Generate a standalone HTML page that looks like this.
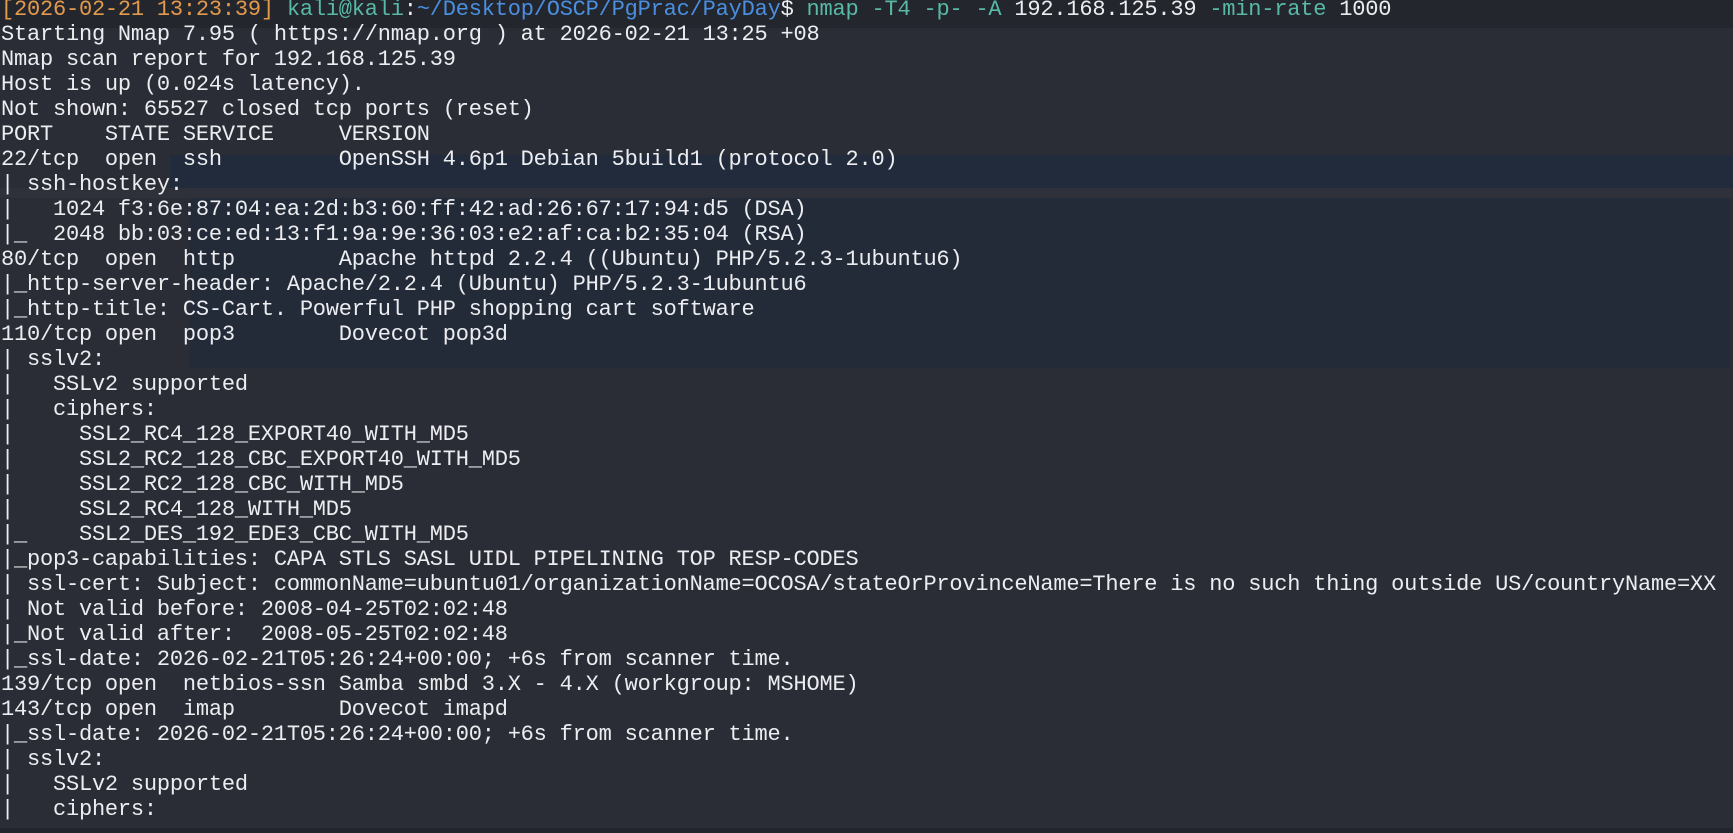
<!DOCTYPE html>
<html><head><meta charset="utf-8"><style>
html,body{margin:0;padding:0;width:1733px;height:833px;overflow:hidden;background:#2a2d36;}
.bg{position:absolute;}
pre{position:absolute;left:1px;top:-3px;margin:0;font-family:"Liberation Mono",monospace;font-size:22px;line-height:25px;color:#ecedf0;letter-spacing:-0.21px;}
.o{color:#e49a4d}.g{color:#58b9a6}.b{color:#4a8fe0}
</style></head><body>
<div class="bg" style="left:0;top:0;width:1733px;height:28px;background:#23262d"></div>
<div class="bg" style="left:170px;top:155px;width:1563px;height:33px;background:#222b3b"></div>
<div class="bg" style="left:0;top:188px;width:1733px;height:10px;background:#2e3139"></div>
<div class="bg" style="left:190px;top:198px;width:1540px;height:170px;background:#232a38"></div>
<div class="bg" style="left:0;top:828px;width:1733px;height:5px;background:#22252c"></div>
<pre><span class="o">[2026-02-21 13:23:39]</span> <span class="g">kali@kali</span>:<span class="b">~/Desktop/OSCP/PgPrac/PayDay</span>$ <span class="g">nmap -T4 -p- -A</span> 192.168.125.39 <span class="g">-min-rate</span> 1000
Starting Nmap 7.95 ( https://nmap.org ) at 2026-02-21 13:25 +08
Nmap scan report for 192.168.125.39
Host is up (0.024s latency).
Not shown: 65527 closed tcp ports (reset)
PORT    STATE SERVICE     VERSION
22/tcp  open  ssh         OpenSSH 4.6p1 Debian 5build1 (protocol 2.0)
| ssh-hostkey:
|   1024 f3:6e:87:04:ea:2d:b3:60:ff:42:ad:26:67:17:94:d5 (DSA)
|_  2048 bb:03:ce:ed:13:f1:9a:9e:36:03:e2:af:ca:b2:35:04 (RSA)
80/tcp  open  http        Apache httpd 2.2.4 ((Ubuntu) PHP/5.2.3-1ubuntu6)
|_http-server-header: Apache/2.2.4 (Ubuntu) PHP/5.2.3-1ubuntu6
|_http-title: CS-Cart. Powerful PHP shopping cart software
110/tcp open  pop3        Dovecot pop3d
| sslv2:
|   SSLv2 supported
|   ciphers:
|     SSL2_RC4_128_EXPORT40_WITH_MD5
|     SSL2_RC2_128_CBC_EXPORT40_WITH_MD5
|     SSL2_RC2_128_CBC_WITH_MD5
|     SSL2_RC4_128_WITH_MD5
|_    SSL2_DES_192_EDE3_CBC_WITH_MD5
|_pop3-capabilities: CAPA STLS SASL UIDL PIPELINING TOP RESP-CODES
| ssl-cert: Subject: commonName=ubuntu01/organizationName=OCOSA/stateOrProvinceName=There is no such thing outside US/countryName=XX
| Not valid before: 2008-04-25T02:02:48
|_Not valid after:  2008-05-25T02:02:48
|_ssl-date: 2026-02-21T05:26:24+00:00; +6s from scanner time.
139/tcp open  netbios-ssn Samba smbd 3.X - 4.X (workgroup: MSHOME)
143/tcp open  imap        Dovecot imapd
|_ssl-date: 2026-02-21T05:26:24+00:00; +6s from scanner time.
| sslv2:
|   SSLv2 supported
|   ciphers:</pre>
</body></html>
